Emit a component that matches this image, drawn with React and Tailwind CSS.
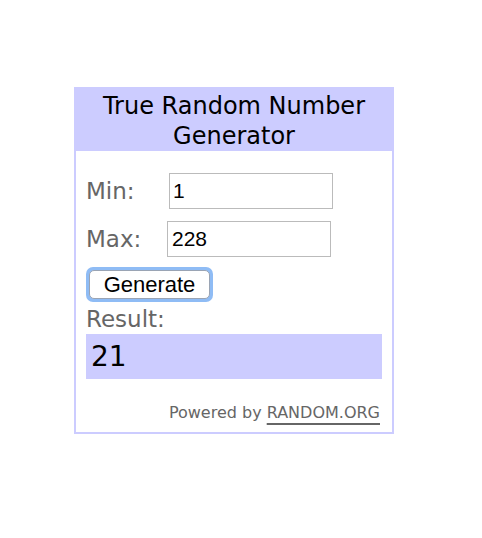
export default function App() {
  return (
    <div className="min-h-screen bg-white pt-[87px] pl-[74px] font-['DejaVu_Sans',Verdana,sans-serif]">
      <div className="w-[320px] h-[347px] border-2 border-[#ccccff] flex flex-col">
        <div className="bg-[#ccccff] h-[62px] pt-[2px] text-center text-[24px] leading-[30px] text-black">
          True Random Number
          <br />
          Generator
        </div>

        <div className="flex flex-col px-[10px] pt-[22px]">
          <div className="flex items-center h-[36px]">
            <span className="w-[83px] text-[23px] text-[#666666]">Min:</span>
            <input
              className="w-[164px] h-[36px] border border-[#bbbbbb] px-[3px] text-[21px] text-black font-['Liberation_Sans',Arial,sans-serif] outline-none"
              defaultValue="1"
            />
          </div>
          <div className="flex items-center h-[36px] mt-[12px]">
            <span className="w-[81px] text-[23px] text-[#666666]">Max:</span>
            <input
              className="w-[164px] h-[36px] border border-[#bbbbbb] px-[4px] text-[21px] text-black font-['Liberation_Sans',Arial,sans-serif] outline-none"
              defaultValue="228"
            />
          </div>

          <div className="mt-[10px] h-[35px] w-[127px] rounded-[7px] bg-[#8fbcf5] p-[3px]">
            <button className="w-full h-full rounded-[5px] bg-white border border-[#9aa4b4] text-[22px] leading-none text-black font-['Liberation_Sans',Arial,sans-serif]">
              Generate
            </button>
          </div>

          <div className="mt-[3px] text-[23px] leading-[28px] text-[#666666]">Result:</div>
          <div className="mt-[1px] h-[45px] bg-[#ccccff] pl-[5px] flex items-center text-[28px] text-black">
            21
          </div>

          <div className="mt-[24px] text-right pr-[2px] text-[16px] leading-[20px] text-[#666666]">
            Powered by{" "}
            <span className="underline underline-offset-[5px] decoration-[2px]">RANDOM.ORG</span>
          </div>
        </div>
      </div>
    </div>
  );
}
